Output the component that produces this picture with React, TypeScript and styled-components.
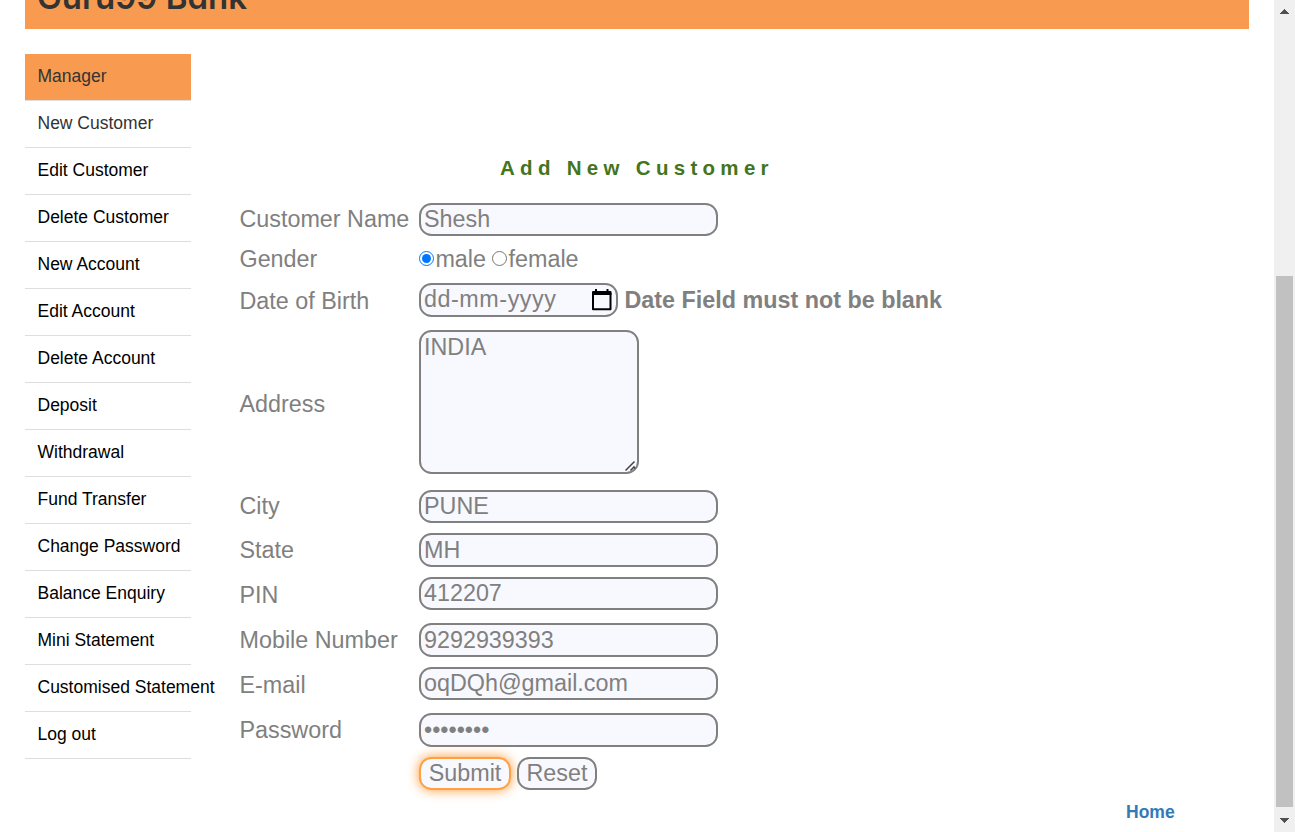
import React from 'react';
import styled, { createGlobalStyle } from 'styled-components';

const GlobalStyle = createGlobalStyle`
  * { box-sizing: border-box; }
  body {
    margin: 0;
    overflow: hidden;
    background: #fff;
    font-family: "Liberation Sans", Arial, sans-serif;
    font-size: 17.5px;
    color: #000;
  }
`;

const Page = styled.div`
  display: flex;
  width: 100%;
  height: 832px;
  overflow: hidden;
`;

const Content = styled.div`
  flex: 1;
  min-width: 0;
  padding: 0 25px;
`;

const Banner = styled.header`
  height: 29px;
  padding-left: 12px;
  background: #f89b51;
  overflow: hidden;
`;

const Brand = styled.h1`
  margin: -26px 0 0;
  font-family: Inter, sans-serif;
  font-feature-settings: "cv11", "ss03";
  font-size: 33px;
  font-weight: 600;
  line-height: 46px;
  letter-spacing: 0;
  color: #333;
  white-space: nowrap;
`;

const Columns = styled.div`
  display: flex;
  padding-top: 25px;
`;

const Menu = styled.ul`
  width: 166px;
  margin: 0;
  padding: 0;
  list-style: none;
`;

const MenuItem = styled.li<{ $heading?: boolean; $tone?: string }>`
  height: 47px;
  padding-left: 12.5px;
  border-bottom: 1px solid #dedede;
  background: ${(p) => (p.$heading ? '#f89b51' : 'transparent')};
  background-clip: padding-box;
  color: ${(p) => p.$tone ?? '#000'};
  line-height: 44px;
  white-space: nowrap;
`;

const Main = styled.main`
  flex: 1;
  padding: 100px 0 0 48.5px;
  font-size: 23.33px;
  color: #808080;
`;

const Title = styled.h2`
  height: 43px;
  margin: 0;
  padding-left: 260.5px;
  font-size: 20.5px;
  font-weight: 700;
  line-height: 28px;
  letter-spacing: 5.3px;
  color: #44751d;
  white-space: nowrap;
`;

const Row = styled.div<{ $height: number }>`
  display: grid;
  grid-template-columns: 179.5px 1fr;
  height: ${(p) => p.$height}px;
`;

const Label = styled.label<{ $top: number }>`
  padding-top: ${(p) => p.$top}px;
  line-height: 27px;
  white-space: nowrap;
`;

const Field = styled.div<{ $top: number }>`
  display: flex;
  align-items: flex-start;
  padding-top: ${(p) => p.$top}px;
`;

const controlStyle = `
  margin: 0;
  border: 2px solid #808080;
  border-radius: 12.5px;
  background: #f8f8ff;
  color: #808080;
  font-family: inherit;
  font-size: 23.33px;
  outline: none;
`;

const TextInput = styled.input<{ $height?: number }>`
  ${controlStyle}
  width: 299px;
  height: ${(p) => p.$height ?? 33}px;
  padding: 0 3px;
`;

const AddressBox = styled.div`
  position: relative;
`;

const AddressInput = styled.textarea`
  ${controlStyle}
  display: block;
  width: 220px;
  height: 144px;
  padding: 2px 3px;
  line-height: 27px;
  resize: none;
`;

const ResizeGrip = styled.svg`
  position: absolute;
  right: 2px;
  bottom: 2px;
`;

const DateInput = styled.div`
  ${controlStyle}
  display: flex;
  align-items: center;
  justify-content: space-between;
  width: 199px;
  height: 34px;
  padding: 0 4px 0 3px;
`;

const DateText = styled.span`
  padding-bottom: 1px;
  letter-spacing: 0.55px;
`;

const ErrorText = styled.strong`
  padding: 4px 0 0 6.5px;
  line-height: 27px;
  white-space: nowrap;
`;

const Radio = styled.input`
  width: 15px;
  height: 15px;
  margin: 5px 1.4px 0 0;
`;

const RadioText = styled.span`
  margin-right: 6.2px;
  line-height: 27px;
`;

const Button = styled.button<{ $focused?: boolean; $width: number }>`
  ${controlStyle}
  width: ${(p) => p.$width}px;
  height: 33px;
  margin-right: 6px;
  padding: 0 0 1px;
  line-height: 27px;
  ${(p) => p.$focused && 'border-color: #ffa042; box-shadow: 0 0 12px #ff9632;'}
`;

const HomeLink = styled.a`
  display: block;
  padding: 4px 0 0 886.5px;
  font-size: 17.5px;
  font-weight: 700;
  line-height: 20px;
  color: #337ab7;
  text-decoration: none;
`;

const ScrollTrack = styled.aside`
  display: flex;
  flex-direction: column;
  align-items: center;
  width: 21px;
  padding: 9px 0;
  background: #f0f0f0;
`;

const ScrollThumb = styled.div`
  width: 17px;
  height: 531px;
  margin: auto 0 11px;
  background: #c1c1c1;
`;

const CalendarIcon = () => (
  <svg width="20" height="22" viewBox="0 0 20 22" fill="none">
    <path d="M1 4V20.2H18.5V4" stroke="#000" strokeWidth="2" strokeLinejoin="round" />
    <path d="M0 3Q0 2 1 2H3V0H5V2H14.5V0H16.5V2H18.5Q19.5 2 19.5 3V6H0Z" fill="#000" />
  </svg>
);

const ScrollArrow = ({ down = false }: { down?: boolean }) => (
  <svg width="9" height="5" viewBox="0 0 9 5" shapeRendering="crispEdges">
    <path d={down ? 'M0 0H9L4.5 5Z' : 'M0 5H9L4.5 0Z'} fill="#505050" />
  </svg>
);

const menuItems = [
  'Edit Customer', 'Delete Customer', 'New Account', 'Edit Account', 'Delete Account',
  'Deposit', 'Withdrawal', 'Fund Transfer', 'Change Password', 'Balance Enquiry',
  'Mini Statement', 'Customised Statement', 'Log out',
];

const textRows = [
  { label: 'City', value: 'PUNE', height: 45, labelTop: 10, top: 7, inputHeight: 33 },
  { label: 'State', value: 'MH', height: 44, labelTop: 9, top: 5, inputHeight: 34 },
  { label: 'PIN', value: '412207', height: 45, labelTop: 10, top: 5, inputHeight: 33 },
  { label: 'Mobile Number', value: '9292939393', height: 45, labelTop: 10, top: 6, inputHeight: 34 },
  { label: 'E-mail', value: 'oqDQh@gmail.com', height: 45, labelTop: 10, top: 5, inputHeight: 33 },
  { label: 'Password', value: 'password', height: 45, labelTop: 10, top: 6, inputHeight: 34 },
];

export default function App() {
  return (
    <>
      <GlobalStyle />
      <Page>
        <Content>
          <Banner>
            <Brand>Guru99 Bank</Brand>
          </Banner>
          <Columns>
            <Menu>
              <MenuItem $heading $tone="#333">Manager</MenuItem>
              <MenuItem $tone="#333">New Customer</MenuItem>
              {menuItems.map((item) => (
                <MenuItem key={item}>{item}</MenuItem>
              ))}
            </Menu>
            <Main>
              <Title>Add New Customer</Title>
              <Row $height={44}>
                <Label $top={9}>Customer Name</Label>
                <Field $top={6}><TextInput defaultValue="Shesh" /></Field>
              </Row>
              <Row $height={36}>
                <Label $top={5}>Gender</Label>
                <Field $top={5}>
                  <Radio type="radio" name="gender" defaultChecked />
                  <RadioText>male</RadioText>
                  <Radio type="radio" name="gender" />
                  <RadioText>female</RadioText>
                </Field>
              </Row>
              <Row $height={46}>
                <Label $top={11}>Date of Birth</Label>
                <Field $top={6}>
                  <DateInput>
                    <DateText>dd-mm-yyyy</DateText>
                    <CalendarIcon />
                  </DateInput>
                  <ErrorText>Date Field must not be blank</ErrorText>
                </Field>
              </Row>
              <Row $height={160}>
                <Label $top={68}>Address</Label>
                <Field $top={7}>
                  <AddressBox>
                    <AddressInput defaultValue="INDIA" />
                    <ResizeGrip width="12" height="12" viewBox="0 0 12 12" fill="none" stroke="#444" strokeWidth="1.5">
                      <path d="M0.5 10.5L9.5 1.5M5.5 10.5L9 7L10 8.5" />
                    </ResizeGrip>
                  </AddressBox>
                </Field>
              </Row>
              {textRows.map((row) => (
                <Row key={row.label} $height={row.height}>
                  <Label $top={row.labelTop}>{row.label}</Label>
                  <Field $top={row.top}>
                    <TextInput
                      type={row.label === 'Password' ? 'password' : 'text'}
                      $height={row.inputHeight}
                      defaultValue={row.value}
                    />
                  </Field>
                </Row>
              ))}
              <Row $height={46}>
                <span />
                <Field $top={5}>
                  <Button $width={92} $focused>Submit</Button>
                  <Button $width={80}>Reset</Button>
                </Field>
              </Row>
              <HomeLink>Home</HomeLink>
            </Main>
          </Columns>
        </Content>
        <ScrollTrack>
          <ScrollArrow />
          <ScrollThumb />
          <ScrollArrow down />
        </ScrollTrack>
      </Page>
    </>
  );
}
